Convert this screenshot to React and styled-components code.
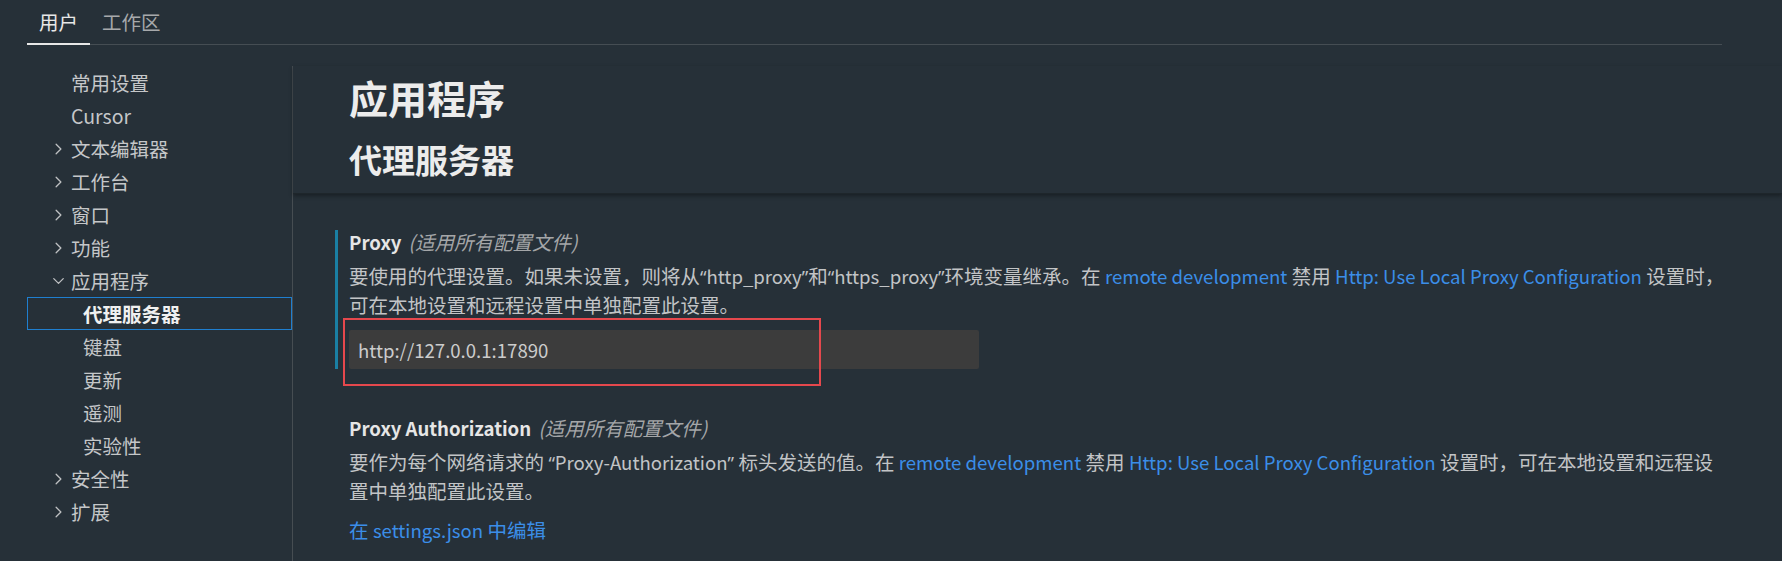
import React from "react";
import styled, { createGlobalStyle } from "styled-components";
import { ChevronRight, ChevronDown } from "lucide-react";

const GlobalStyle = createGlobalStyle`
  html, body {
    margin: 0;
    padding: 0;
    background: #263038;
    height: 100%;
    overflow: hidden;
  }
  body {
    font-family: "Noto Sans CJK SC", "Noto Sans", sans-serif;
    color: #cccccc;
  }
`;

const navItems = [
  { label: "常用设置" },
  { label: "Cursor" },
  { label: "文本编辑器", chevron: "right" },
  { label: "工作台", chevron: "right" },
  { label: "窗口", chevron: "right" },
  { label: "功能", chevron: "right" },
  { label: "应用程序", chevron: "down" },
  { label: "代理服务器", child: true, active: true },
  { label: "键盘", child: true },
  { label: "更新", child: true },
  { label: "遥测", child: true },
  { label: "实验性", child: true },
  { label: "安全性", chevron: "right" },
  { label: "扩展", chevron: "right" },
];

export default function App() {
  return (
    <Page>
      <GlobalStyle />
      <TabBar>
        <Tab $active>用户</Tab>
        <Tab>工作区</Tab>
      </TabBar>
      <Body>
        <Sidebar>
          {navItems.map((item) => (
            <NavRow key={item.label} $child={item.child} $active={item.active}>
              {!item.child && (
                <ChevronSlot>
                  {item.chevron === "right" && <ChevronRight size={20} strokeWidth={1.6} />}
                  {item.chevron === "down" && <ChevronDown size={20} strokeWidth={1.6} />}
                </ChevronSlot>
              )}
              {item.label}
            </NavRow>
          ))}
        </Sidebar>
        <Content>
          <Header>
            <Title>应用程序</Title>
            <SubTitle>代理服务器</SubTitle>
          </Header>
          <SettingsList>
            <Setting $focused>
              <Label>
                Proxy<Scope>(适用所有配置文件)</Scope>
              </Label>
              <Description>
                要使用的代理设置。如果未设置，则将从<Quote>“</Quote>
                <En>http_proxy</En>
                <Quote>”</Quote>和<Quote>“</Quote>
                <En>https_proxy</En>
                <Quote>”</Quote>环境变量继承。在 <Link>remote development</Link> 禁用{" "}
                <Link>Http: Use Local Proxy Configuration</Link> 设置时，
                <br />
                可在本地设置和远程设置中单独配置此设置。
              </Description>
              <InputWrap>
                <TextInput defaultValue="http://127.0.0.1:17890" />
                <Annotation />
              </InputWrap>
            </Setting>
            <Setting>
              <Label>
                Proxy Authorization<Scope>(适用所有配置文件)</Scope>
              </Label>
              <Description>
                要作为每个网络请求的 <Quote>“</Quote>
                <En>Proxy-Authorization</En>
                <Quote>”</Quote> 标头发送的值。在 <Link>remote development</Link> 禁用{" "}
                <Link>Http: Use Local Proxy Configuration</Link> 设置时，可在本地设置和远程设
                <br />
                置中单独配置此设置。
              </Description>
              <EditLink>
                在 <En>settings.json</En> 中编辑
              </EditLink>
            </Setting>
          </SettingsList>
        </Content>
      </Body>
    </Page>
  );
}

const Page = styled.div`
  width: 1782px;
  height: 561px;
  overflow: hidden;
  display: flex;
  flex-direction: column;
`;

const TabBar = styled.div`
  display: flex;
  align-items: stretch;
  height: 44px;
  margin: 0 60px 0 27px;
  border-bottom: 1px solid #454d53;
`;

const Tab = styled.div`
  display: flex;
  align-items: center;
  padding: 0 12px;
  margin-bottom: -1px;
  font-size: 19.5px;
  color: ${(p) => (p.$active ? "#e7e7e7" : "#a7a9ab")};
  border-bottom: 2px solid ${(p) => (p.$active ? "#e7e7e7" : "transparent")};
`;

const Body = styled.div`
  flex: 1;
  display: flex;
  margin-top: 21px;
  min-height: 0;
`;

const Sidebar = styled.div`
  width: 265px;
  margin-left: 27px;
  border-right: 1px solid #464d52;
  display: flex;
  flex-direction: column;
`;

const NavRow = styled.div`
  display: flex;
  align-items: center;
  height: 33px;
  box-sizing: border-box;
  padding-left: ${(p) => (p.$child ? "55px" : "24px")};
  font-size: 19.5px;
  font-weight: ${(p) => (p.$active ? 700 : 400)};
  color: ${(p) => (p.$active ? "#f0f0f0" : "#c5c7c9")};
  border: 1px solid ${(p) => (p.$active ? "#1f7fd0" : "transparent")};
`;

const ChevronSlot = styled.span`
  width: 19px;
  display: flex;
  align-items: center;
  margin-left: -3px;
  margin-right: 3px;
  color: #bfc1c3;
`;

const Content = styled.div`
  flex: 1;
  display: flex;
  flex-direction: column;
  min-width: 0;
`;

const Header = styled.div`
  padding: 7px 0 14px 56px;
  border-bottom: 1px solid #1e262b;
  box-shadow: 0 2px 4px rgba(0, 0, 0, 0.35);
`;

const Title = styled.div`
  font-size: 39px;
  line-height: 48px;
  font-weight: 700;
  color: #ececec;
`;

const SubTitle = styled.div`
  margin-top: 18px;
  font-size: 33px;
  line-height: 40px;
  font-weight: 700;
  color: #ececec;
`;

const SettingsList = styled.div`
  display: flex;
  flex-direction: column;
  gap: 47px;
  padding: 36px 0 0 42px;
`;

const Setting = styled.div`
  display: flex;
  flex-direction: column;
  align-items: flex-start;
  padding-left: 11px;
  border-left: 3px solid ${(p) => (p.$focused ? "#1a7fa3" : "transparent")};
`;

const Label = styled.div`
  font-size: 18.6px;
  line-height: 24px;
  font-weight: 600;
  color: #e6e6e6;
`;

const Scope = styled.span`
  margin-left: 7px;
  font-size: 19.5px;
  font-weight: 400;
  font-style: italic;
  color: #a4a6a8;
`;

const Description = styled.div`
  margin-top: 8px;
  font-size: 19.5px;
  line-height: 28px;
  color: #c2c4c6;
  white-space: nowrap;
`;

const En = styled.span`
  font-size: 18.6px;
`;

const Quote = styled.span`
  font-family: "Noto Sans", sans-serif;
  font-size: 18px;
`;

const Link = styled.span`
  font-size: 18.6px;
  color: #3b8ee8;
`;

const InputWrap = styled.div`
  position: relative;
  margin-top: 11px;
`;

const TextInput = styled.input`
  display: block;
  width: 630px;
  height: 39px;
  box-sizing: border-box;
  padding: 0 9px;
  border: none;
  border-radius: 2px;
  outline: none;
  background: #3c3c3c;
  color: #cccccc;
  font-family: "Noto Sans CJK SC", "Noto Sans", sans-serif;
  font-size: 18.6px;
`;

const Annotation = styled.div`
  position: absolute;
  left: -6px;
  top: -12px;
  width: 478px;
  height: 68px;
  box-sizing: border-box;
  border: 2px solid #e5484d;
  pointer-events: none;
`;

const EditLink = styled.div`
  margin-top: 11px;
  font-size: 19.5px;
  line-height: 28px;
  color: #3b8ee8;
`;
